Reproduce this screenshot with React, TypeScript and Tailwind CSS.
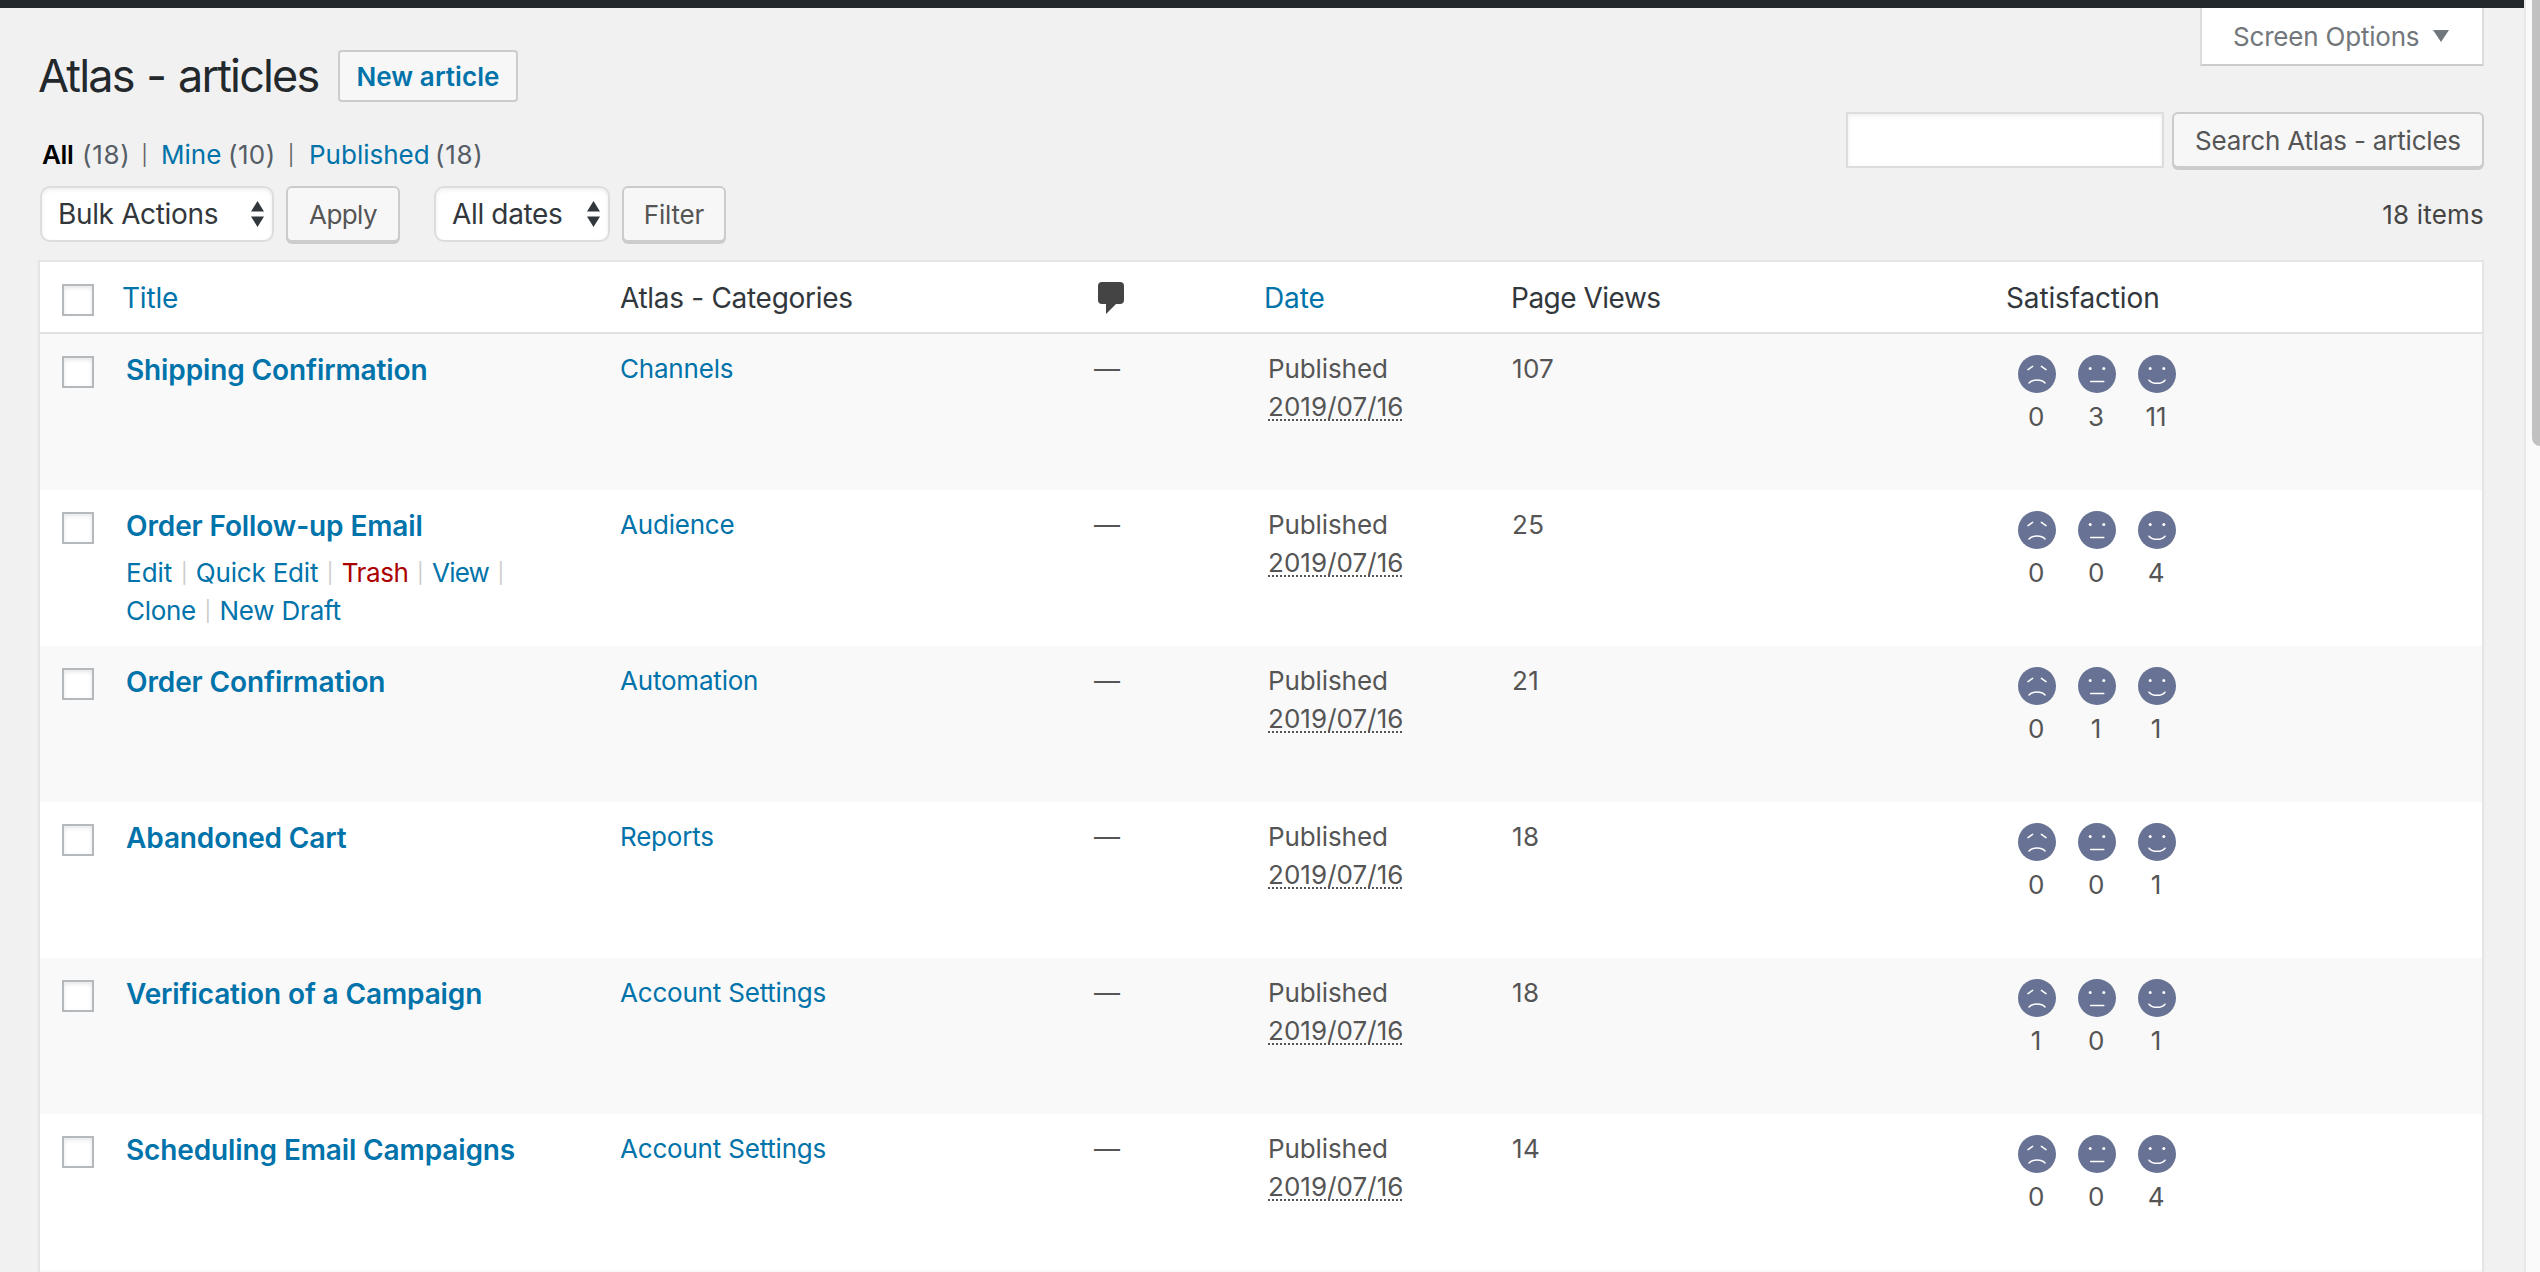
import { Fragment, type ReactNode } from "react";

type Article = {
  title: string;
  category: string;
  views: number;
  votes: [number, number, number];
  actions?: boolean;
};

const articles: Article[] = [
  { title: "Shipping Confirmation", category: "Channels", views: 107, votes: [0, 3, 11] },
  { title: "Order Follow-up Email", category: "Audience", views: 25, votes: [0, 0, 4], actions: true },
  { title: "Order Confirmation", category: "Automation", views: 21, votes: [0, 1, 1] },
  { title: "Abandoned Cart", category: "Reports", views: 18, votes: [0, 0, 1] },
  { title: "Verification of a Campaign", category: "Account Settings", views: 18, votes: [1, 0, 1] },
  { title: "Scheduling Email Campaigns", category: "Account Settings", views: 14, votes: [0, 0, 4] },
];

const columns = "grid grid-cols-[82px_498px_474px_170px_246px_494px_1fr]";

function Checkbox({ className }: { className: string }) {
  return (
    <span
      className={`block size-8 border-2 border-[#b4b9be] bg-white shadow-[inset_0_2px_4px_rgba(0,0,0,0.1)] ${className}`}
    />
  );
}

function Select({ label, className }: { label: string; className: string }) {
  return (
    <div
      className={`flex h-14 items-center justify-between rounded-[10px] border-2 border-[#ddd] bg-white pr-2 pl-4 text-[28px] leading-none tracking-[-0.35px] text-[#32373c] shadow-[inset_0_2px_4px_rgba(0,0,0,0.07)] ${className}`}
    >
      <span>{label}</span>
      <svg width="13" height="26" viewBox="0 0 13 26" fill="#32373c">
        <path d="M6.5 0 13 10.5H0zM6.5 26 0 15.5h13z" />
      </svg>
    </div>
  );
}

function Button({ children, className }: { children: ReactNode; className: string }) {
  return (
    <button
      className={`flex h-14 items-center justify-center rounded-md border-2 border-[#ccc] bg-[#f7f7f7] pt-px leading-none text-[#555] shadow-[0_2px_0_#ccc] ${className}`}
    >
      {children}
    </button>
  );
}

function Face({ mood }: { mood: number }) {
  return (
    <svg width="38" height="38" viewBox="0 0 38 38" fill="none" stroke="#fff" strokeWidth="1.5" strokeLinecap="round">
      <circle cx="19" cy="19" r="19" fill="#677294" stroke="none" />
      {mood === 0 ? (
        <path d="M10 14.6 14.6 11.4M23.4 11.4 28 14.6M11 28C14.5 24 23.5 24 27 28" />
      ) : (
        <>
          <circle cx="12.2" cy="13.6" r="1.5" fill="#fff" stroke="none" />
          <circle cx="25.8" cy="13.6" r="1.5" fill="#fff" stroke="none" />
          {mood === 1 ? <path d="M12.6 26.4H25.8" /> : <path d="M11 25.2C14.5 29.4 23.5 29.4 27 25.2" />}
        </>
      )}
    </svg>
  );
}

function ActionLinks({ labels }: { labels: [string, string][] }) {
  return (
    <div className="flex h-[38px]">
      {labels.map(([label, color], i) => (
        <Fragment key={label}>
          {i > 0 && <span className="w-[23.5px] text-center text-[20px] text-[#ccc]">|</span>}
          <span className={color}>{label}</span>
        </Fragment>
      ))}
      {labels.length > 2 && <span className="w-[23.5px] text-center text-[20px] text-[#ccc]">|</span>}
    </div>
  );
}

function Row({ article, striped }: { article: Article; striped: boolean }) {
  return (
    <div className={`${columns} h-[156px] pt-4 leading-[38px] ${striped ? "bg-[#f9f9f9]" : "bg-white"}`}>
      <Checkbox className="mt-1.5 ml-[22px]" />
      <div className="pt-px pl-1">
        <div className="text-[28px] font-semibold tracking-[-0.12px] text-[#0073aa]">{article.title}</div>
        {article.actions && (
          <div className="pt-[9px] text-[#0073aa]">
            <ActionLinks
              labels={[
                ["Edit", "tracking-normal"],
                ["Quick Edit", ""],
                ["Trash", "text-[#a00] tracking-[-0.4px]"],
                ["View", "tracking-[-0.8px]"],
              ]}
            />
            <ActionLinks
              labels={[
                ["Clone", "tracking-[-0.3px]"],
                ["New Draft", ""],
              ]}
            />
          </div>
        )}
      </div>
      <div className="text-[#0073aa]">{article.category}</div>
      <div>—</div>
      <div className="pl-1">
        <div className="tracking-[-0.1px]">Published</div>
        <div>
          <abbr className="tracking-[0.05px] underline decoration-dotted decoration-2 underline-offset-[3px] [text-decoration-skip-ink:none]">
            2019/07/16
          </abbr>
        </div>
      </div>
      <div className="pl-0.5 tracking-[0.3px]">{article.views}</div>
      <div className="flex pt-[5px] pl-[3px]">
        {article.votes.map((count, mood) => (
          <div key={mood} className="flex w-[60px] flex-col items-center">
            <Face mood={mood} />
            <span className="mt-[5px] pr-0.5">{count}</span>
          </div>
        ))}
      </div>
    </div>
  );
}

export default function App() {
  return (
    <div className="flex h-[1272px] w-[2540px] overflow-hidden bg-[#f1f1f1] font-['Inter','Liberation_Sans',sans-serif] text-[26px] tracking-[-0.2px] text-[#555]">
      <div className="w-[2524px] shrink-0">
        <div className="h-2 bg-[#23282d]" />
        <div className="pr-10 pl-[38px]">
          <div className="flex h-[178px] items-start justify-between">
            <div className="pt-[42px]">
              <div className="flex h-[52px] items-center gap-[18px]">
                <h1 className="w-[282px] text-[45px] leading-[50px] tracking-[-1.85px] [word-spacing:2px] whitespace-nowrap text-[#23282d]">
                  Atlas - articles
                </h1>
                <button className="flex h-[52px] w-[180px] items-center justify-center rounded-sm border-2 border-[#ccc] bg-[#f7f7f7] pt-px leading-none font-semibold tracking-[0.1px] text-[#0073aa]">
                  New article
                </button>
              </div>
              <div className="mt-[34px] flex pl-1 leading-[38px] tracking-normal">
                <span className="w-10 font-semibold tracking-[-0.3px] text-black">All</span>
                <span className="w-[50px] tracking-[0.7px] text-[#555d66]">(18)</span>
                <span className="mr-1 w-[25px] text-center text-[20px] text-[#666]">|</span>
                <span className="w-[67px] text-[#0073aa]">Mine</span>
                <span className="w-[50px] tracking-[0.4px] text-[#555d66]">(10)</span>
                <span className="mr-[5px] w-[26px] text-center text-[20px] text-[#666]">|</span>
                <span className="w-[126px] text-[#0073aa]">Published</span>
                <span className="tracking-[0.7px] text-[#555d66]">(18)</span>
              </div>
            </div>
            <div className="flex flex-col items-end">
              <div className="flex h-[58px] w-[284px] items-center gap-3.5 border-2 border-t-0 border-[#ddd] border-b-[#ccc] bg-white pl-[31px] leading-none text-[#72777c]">
                <span className="pt-0.5">Screen Options</span>
                <svg width="16" height="12" viewBox="0 0 16 12" fill="#72777c">
                  <path d="M0 0h16L8 12z" />
                </svg>
              </div>
              <div className="mt-[46px] flex gap-2">
                <input className="h-14 w-[318px] border-2 border-[#ddd] bg-white shadow-[inset_0_2px_4px_rgba(0,0,0,0.07)]" />
                <Button className="w-[312px]">Search Atlas - articles</Button>
              </div>
            </div>
          </div>

          <div className="flex h-14 items-center pl-0.5">
            <Select label="Bulk Actions" className="w-[234px]" />
            <Button className="ml-3 w-[114px] tracking-[-0.6px]">Apply</Button>
            <Select label="All dates" className="ml-[34px] w-[176px]" />
            <Button className="ml-3 w-[104px]">Filter</Button>
            <span className="ml-auto pt-px tracking-[0.2px] text-[#444]">18 items</span>
          </div>

          <div className="mt-[18px] h-[1100px] border-2 border-[#e5e5e5] bg-[#f9f9f9] shadow-[0_2px_2px_rgba(0,0,0,0.04)]">
            <div
              className={`${columns} h-[72px] items-center border-b-2 border-[#e1e1e1] bg-white pt-px text-[28px] leading-none tracking-[-0.3px] text-[#32373c]`}
            >
              <Checkbox className="mt-[5px] ml-[22px]" />
              <div className="tracking-[-0.2px] text-[#0073aa]">Title</div>
              <div>Atlas - Categories</div>
              <svg className="ml-1" width="26" height="32" viewBox="0 0 26 32" fill="#444">
                <path d="M4 0H22a4 4 0 0 1 4 4V18a4 4 0 0 1-4 4H18L8 32V22H4a4 4 0 0 1-4-4V4a4 4 0 0 1 4-4z" />
              </svg>
              <div className="tracking-[-0.1px] text-[#0073aa]">Date</div>
              <div className="pl-px tracking-[-0.5px]">Page Views</div>
              <div className="pl-0.5 tracking-[-0.15px]">Satisfaction</div>
            </div>
            {articles.map((article, i) => (
              <Row key={article.title} article={article} striped={i % 2 === 0} />
            ))}
          </div>
        </div>
      </div>
      <div className="flex w-4 shrink-0 justify-end border-l-2 border-[#e8e8e8] bg-[#fafafa]">
        <div className="h-[446px] w-2 rounded-bl-lg bg-[#c1c1c1]" />
      </div>
    </div>
  );
}
